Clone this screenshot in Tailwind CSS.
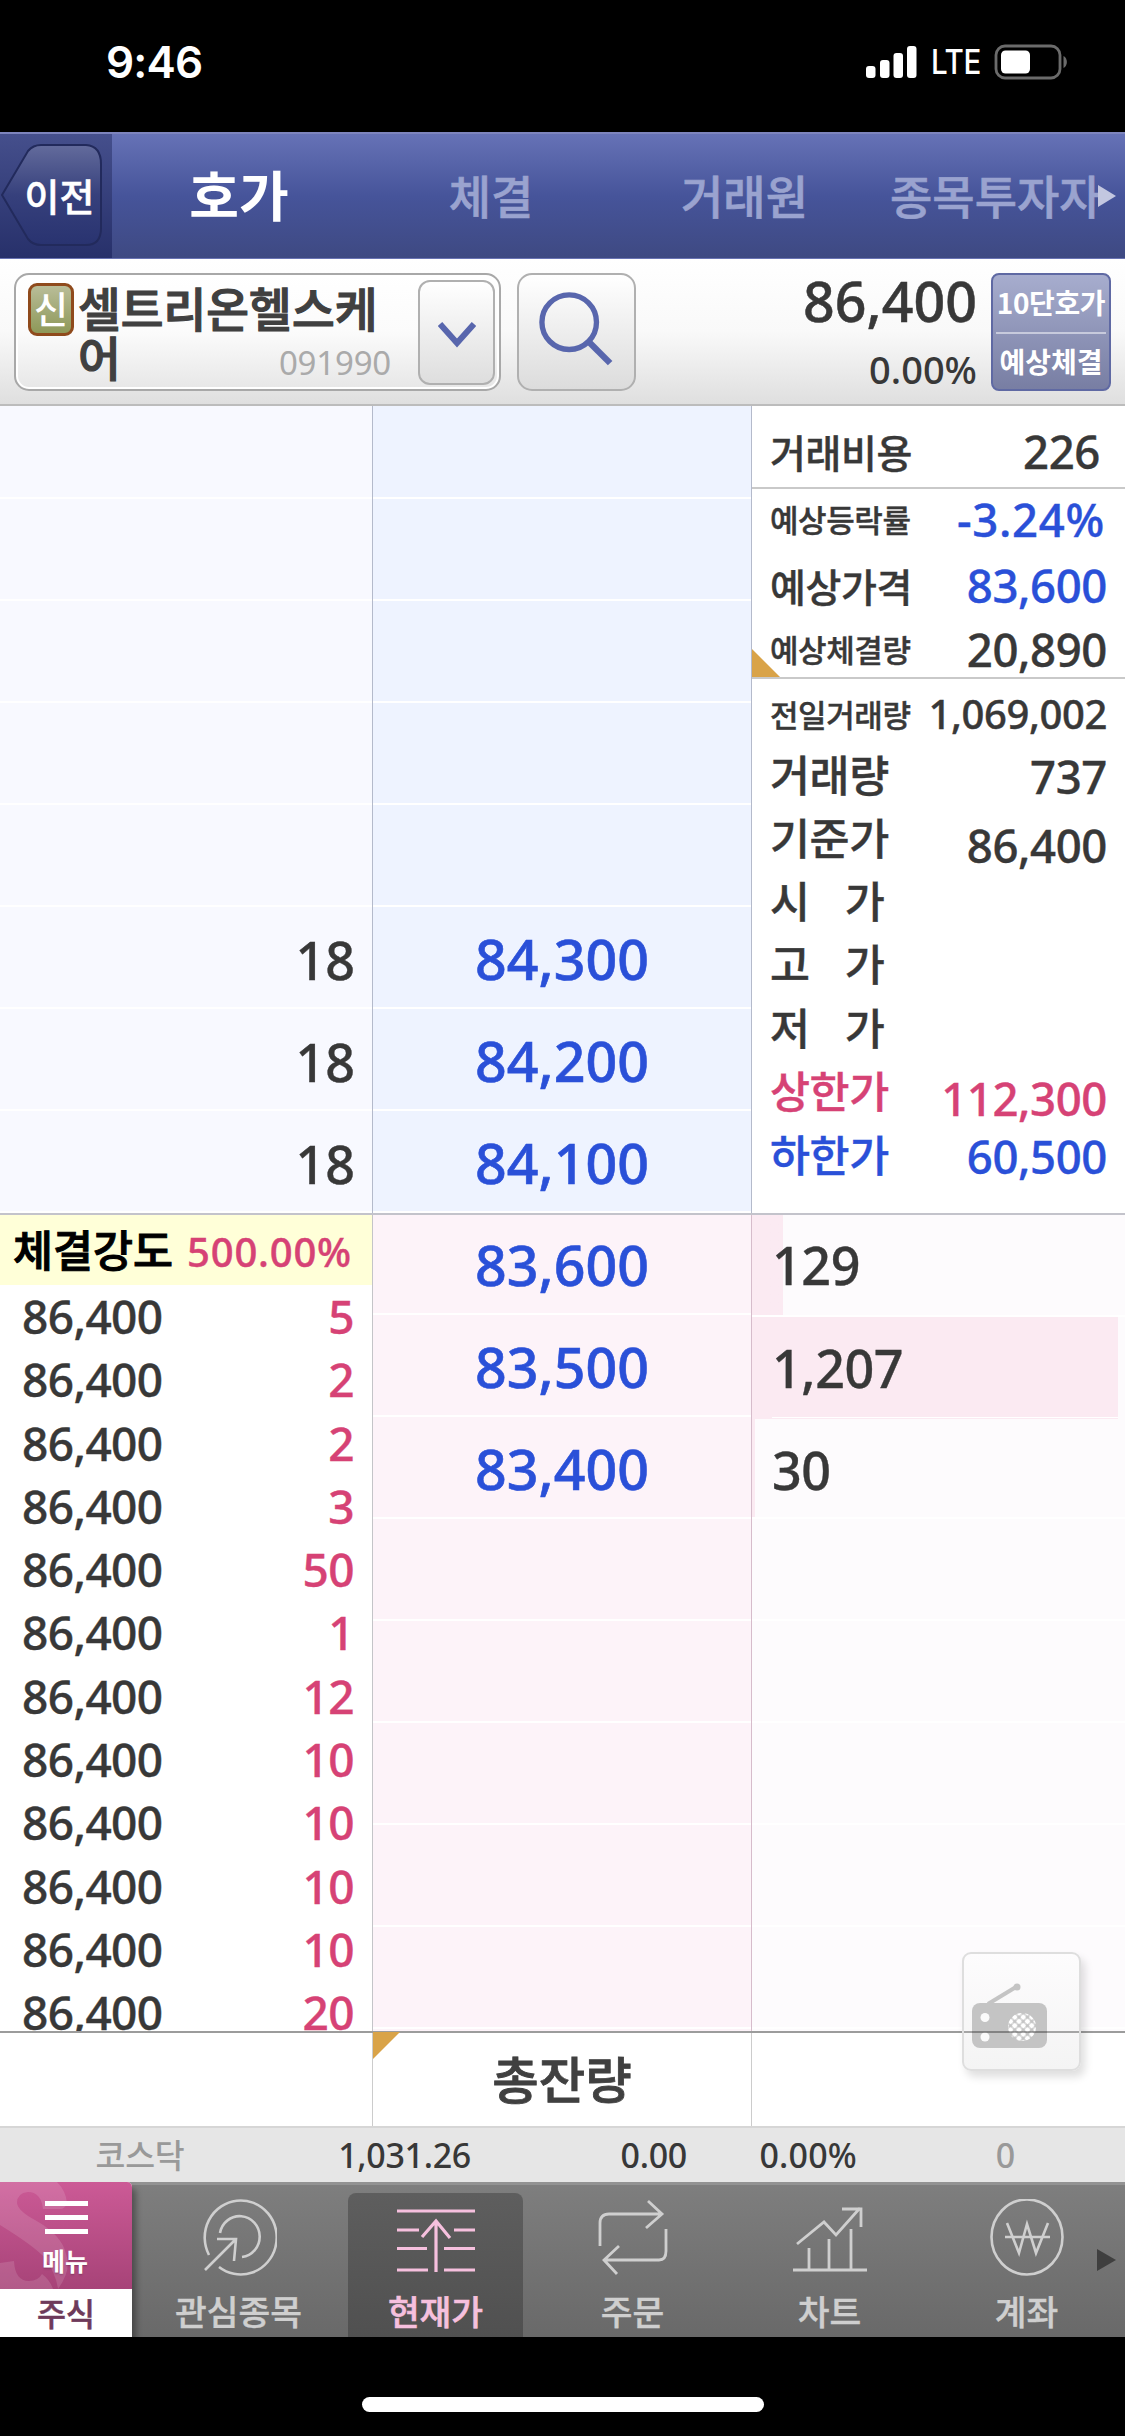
<!DOCTYPE html>
<html lang="ko">
<head>
<meta charset="utf-8">
<title>호가</title>
<script src="https://cdn.jsdelivr.net/npm/@tailwindcss/browser@4"></script>
</head>
<body class="w-[1125px] h-[2436px] overflow-hidden bg-black font-['Noto_Sans','Noto_Sans_CJK_KR',sans-serif] font-medium text-[#383838] leading-none whitespace-nowrap">

<!-- status bar -->
<header class="flex h-[132px] items-start justify-between pl-[106px] pr-[58px] pt-[39px] text-white font-['Inter',sans-serif]">
  <div class="text-[44px] leading-[46px] font-semibold tracking-[-0.8px]">9:46</div>
  <div class="flex h-[46px] items-center">
    <svg class="w-[52px] h-[34px]" viewBox="0 0 52 34" fill="#fff"><rect x="0" y="21" width="9.500" height="12" rx="3"/><rect x="14" y="15" width="9.500" height="18" rx="3"/><rect x="27.500" y="8" width="9.500" height="25" rx="3"/><rect x="41" y="1" width="9.500" height="32" rx="3"/></svg>
    <div class="ml-[13px] w-[51px] origin-left scale-x-[0.87] text-[34px] leading-[46px] tracking-[-0.5px]">LTE</div>
    <svg class="ml-[12px] w-[73px] h-[36px]" viewBox="0 0 73 36"><rect x="2" y="2" width="64" height="32" rx="9" fill="none" stroke="#6b6b6b" stroke-width="2.8"/><rect x="7" y="6.500" width="29" height="23" rx="4.500" fill="#fff"/><path d="M69.500 12c4.500 2 4.500 10 0 12z" fill="#6b6b6b"/></svg>
  </div>
</header>

<!-- section tabs -->
<nav class="relative flex h-[127px] border-t-2 border-[#7d84bd] bg-linear-to-b from-[#6672b6] via-[#46549a] to-[#3e4982] font-['Noto_Sans_CJK_KR',sans-serif] text-[46px] text-[#9aa3cf]">
  <div class="relative flex w-[112px] items-center bg-linear-to-b from-[#454f8c] to-[#27306a] text-white">
    <svg class="absolute left-0 top-[8px] w-[104px] h-[108px]" viewBox="0 0 104 108"><defs><linearGradient id="bk" x1="0" y1="0" x2="0" y2="1"><stop offset="0" stop-color="#636b9c"/><stop offset=".5" stop-color="#36407c"/><stop offset="1" stop-color="#293370"/></linearGradient></defs><path d="M2 53 L28 9 Q33 3 41 3 H86 Q101 4 101 22 V86 Q101 103 86 103 H41 Q33 103 28 97Z" fill="url(#bk)" stroke="#222a5c" stroke-width="2"/></svg>
    <div class="relative w-[112px] pl-[7px] pb-[4px] text-center text-[38px] [-webkit-text-stroke:0.5px]">이전</div>
  </div>
  <div class="flex h-[122px] flex-1 items-center pb-[3px] [-webkit-text-stroke:0.6px]">
    <div class="w-[254px] text-center text-[54px] font-bold text-white [-webkit-text-stroke:0px]">호가</div>
    <div class="w-[250px] text-center">체결</div>
    <div class="w-[257px] text-center">거래원</div>
    <div class="w-[252px] pl-[17px]">종목투자자</div>
  </div>
  <svg class="absolute right-[9px] top-[50px] w-[18px] h-[24px]" viewBox="0 0 18 24"><path d="M0 1L18 12L0 23Z" fill="#c3c7e0"/></svg>
  <div class="absolute inset-x-0 bottom-0 h-[1px] bg-[#6973b3]"></div>
</nav>

<!-- stock header -->
<section class="flex h-[147px] items-start border-b-2 border-[#bcbcbc] bg-linear-to-b from-white via-[#f9f9f9] to-[#dfdfdf] pl-[14px] pt-[14px]">
  <div class="flex h-[118px] w-[487px] rounded-[15px] border-2 border-[#a8a8a8] bg-linear-to-b from-white via-[#fbfbfb] to-[#e7e7e7] ring-2 ring-inset ring-white font-['Noto_Sans_CJK_KR',sans-serif]">
    <div class="ml-[12px] mt-[8px] flex h-[53px] w-[46px] items-center justify-center rounded-[9px] border-[3px] border-[#8f4a1c] bg-linear-to-b from-[#b9bd98] to-[#8e9858] pb-[3px] text-[37px] text-white">신</div>
    <div class="relative ml-[4px] w-[320px] pt-[7px] text-[46.5px] leading-[49px] text-[#404040] [-webkit-text-stroke:1.2px]">셀트리온헬스케<br>어
      <div class="absolute right-[7px] top-[64px] font-['Noto_Sans',sans-serif] text-[33px] leading-[48px] font-normal tracking-[-0.2px] text-[#aaaaaa] [-webkit-text-stroke:0px]">091990</div>
    </div>
    <div class="ml-[20px] mt-[5px] flex h-[105px] w-[77px] items-center justify-center rounded-[12px] border-2 border-[#b0b0b0] bg-linear-to-b from-white to-[#dedede]">
      <svg class="mt-[5px] w-[38px] h-[26px]" viewBox="0 0 38 26" fill="none" stroke="#5866ad" stroke-width="6"><path d="M2 2L19 21L36 2"/></svg>
    </div>
  </div>
  <div class="ml-[16px] flex h-[118px] w-[119px] items-start rounded-[15px] border-2 border-[#b0b0b0] bg-linear-to-b from-white to-[#dcdcdc]">
    <svg class="ml-[20px] mt-[17px] w-[76px] h-[76px]" viewBox="0 0 78 78" fill="none" stroke="#5866ad" stroke-width="5.5"><circle cx="31" cy="31" r="28"/><path d="M51 51L73 73" stroke-width="6.5"/></svg>
  </div>
  <div class="w-[341px] text-right">
    <div class="h-[56px] pr-0 text-[55.5px] leading-[56px] [-webkit-text-stroke:0.5px]">86,400</div>
    <div class="mt-[20px] h-[40px] text-[38px] leading-[40px]">0.00%</div>
  </div>
  <div class="ml-[14px] h-[118px] w-[120px] rounded-[8px] border-2 border-[#5f69a3] bg-linear-to-b from-[#a7adce] to-[#787ea3] px-[3px] text-center font-['Noto_Sans_CJK_KR',sans-serif] text-[28px] font-bold text-white">
    <div class="h-[59px] border-b-2 border-white/50 leading-[55px] tracking-[-0.4px]">10단호가</div>
    <div class="leading-[54px]">예상체결</div>
  </div>
</section>

<!-- asks and quote summary -->
<section class="flex h-[809px] border-b-2 border-[#c3c3cb] bg-white">
  <div class="w-[373px] border-r border-[#b4bacb] bg-[#f8f9ff] text-right text-[52px] [-webkit-text-stroke:0.4px]">
    <div class="h-[93px] border-b-2 border-white"></div>
    <div class="h-[102px] border-b-2 border-white"></div>
    <div class="h-[102px] border-b-2 border-white"></div>
    <div class="h-[102px] border-b-2 border-white"></div>
    <div class="h-[102px] border-b-2 border-white"></div>
    <div class="h-[102px] border-b-2 border-white pr-[17px] leading-[105px]">18</div>
    <div class="h-[102px] border-b-2 border-white pr-[17px] leading-[105px]">18</div>
    <div class="h-[102px] border-b-2 border-white pr-[17px] leading-[105px]">18</div>
  </div>
  <div class="w-[379px] border-r border-[#b4bacb] bg-[#eef3ff] text-center text-[55.5px] text-[#2a50d8] [-webkit-text-stroke:0.6px]">
    <div class="h-[93px] border-b-2 border-white"></div>
    <div class="h-[102px] border-b-2 border-white"></div>
    <div class="h-[102px] border-b-2 border-white"></div>
    <div class="h-[102px] border-b-2 border-white"></div>
    <div class="h-[102px] border-b-2 border-white"></div>
    <div class="h-[102px] border-b-2 border-white leading-[104px]">84,300</div>
    <div class="h-[102px] border-b-2 border-white leading-[104px]">84,200</div>
    <div class="h-[102px] border-b-2 border-white leading-[104px]">84,100</div>
  </div>
  <div class="w-[373px] text-[45.5px] tracking-[-0.4px] [-webkit-text-stroke:0.4px]">
    <div class="flex h-[83px] justify-between border-b-2 border-[#c9c9c9] pl-[18px] pr-[25px] leading-[90px]"><span class="font-['Noto_Sans_CJK_KR',sans-serif] text-[39px]">거래비용</span><span>226</span></div>
    <div class="relative h-[190px] border-b-2 border-[#c9c9c9] pl-[18px] pr-[18px]">
      <div class="absolute bottom-0 left-0 size-[28px] bg-[#d9a348] [clip-path:polygon(0_0,100%_100%,0_100%)]"></div>
      <div class="relative flex h-[64px] justify-between pr-[2px] leading-[60px]"><span class="font-['Noto_Sans_CJK_KR',sans-serif] text-[31px]">예상등락률</span><span class="tracking-[0.7px] text-[#2a50d8]">-3.24%</span></div>
      <div class="relative flex h-[68px] justify-between leading-[64px]"><span class="font-['Noto_Sans_CJK_KR',sans-serif] text-[39px]">예상가격</span><span class="text-[#2a50d8]">83,600</span></div>
      <div class="relative flex h-[56px] justify-between leading-[56px]"><span class="font-['Noto_Sans_CJK_KR',sans-serif] text-[31px]">예상체결량</span><span>20,890</span></div>
    </div>
    <div class="pl-[18px] pr-[18px] pt-[4px] leading-[62px]">
      <div class="flex h-[63px] justify-between"><span class="font-['Noto_Sans_CJK_KR',sans-serif] text-[31px] leading-[61px]">전일거래량</span><span class="text-[40px] leading-[61px]">1,069,002</span></div>
      <div class="flex h-[63px] justify-between"><span class="font-['Noto_Sans_CJK_KR',sans-serif] text-[43.5px] leading-[56px]">거래량</span><span class="leading-[60px]">737</span></div>
      <div class="flex h-[64px] justify-between"><span class="font-['Noto_Sans_CJK_KR',sans-serif] text-[43.5px] leading-[56px]">기준가</span><span class="pt-[5px]">86,400</span></div>
      <div class="flex h-[63px] gap-[35px] font-['Noto_Sans_CJK_KR',sans-serif] text-[43.5px] leading-[54px]"><span>시</span><span>가</span></div>
      <div class="flex h-[63px] gap-[35px] font-['Noto_Sans_CJK_KR',sans-serif] text-[43.5px] leading-[54px]"><span>고</span><span>가</span></div>
      <div class="flex h-[63px] gap-[35px] font-['Noto_Sans_CJK_KR',sans-serif] text-[43.5px] leading-[55px]"><span>저</span><span>가</span></div>
      <div class="flex h-[64px] justify-between text-[#d64275]"><span class="font-['Noto_Sans_CJK_KR',sans-serif] text-[43.5px] leading-[56px]">상한가</span><span class="pt-[5px]">112,300</span></div>
      <div class="flex h-[63px] justify-between text-[#2a50d8]"><span class="font-['Noto_Sans_CJK_KR',sans-serif] text-[43.5px] leading-[56px]">하한가</span><span class="leading-[61px]">60,500</span></div>
    </div>
  </div>
</section>

<!-- trades and bids -->
<section class="relative flex h-[816px] bg-white">
  <div class="h-[816px] w-[373px] overflow-hidden border-r border-[#c4c4c8] text-[46px] leading-[62px] [-webkit-text-stroke:0.4px]">
    <div class="flex h-[70px] justify-between bg-[#ffffd8] pl-[13px] pr-[20px] leading-[70px]"><span class="font-['Noto_Sans_CJK_KR',sans-serif] text-[43.5px] leading-[68px] text-black [-webkit-text-stroke:1px]">체결강도</span><span class="text-[40px] leading-[73px] tracking-[0.8px] text-[#d64275]">500.00%</span></div>
    <div class="tracking-[-0.6px]">
      <div class="flex h-[63.3px] justify-between pl-[22px] pr-[18px]"><span>86,400</span><span class="text-[#d64275]">5</span></div>
      <div class="flex h-[63.3px] justify-between pl-[22px] pr-[18px]"><span>86,400</span><span class="text-[#d64275]">2</span></div>
      <div class="flex h-[63.3px] justify-between pl-[22px] pr-[18px]"><span>86,400</span><span class="text-[#d64275]">2</span></div>
      <div class="flex h-[63.3px] justify-between pl-[22px] pr-[18px]"><span>86,400</span><span class="text-[#d64275]">3</span></div>
      <div class="flex h-[63.3px] justify-between pl-[22px] pr-[18px]"><span>86,400</span><span class="text-[#d64275]">50</span></div>
      <div class="flex h-[63.3px] justify-between pl-[22px] pr-[18px]"><span>86,400</span><span class="text-[#d64275]">1</span></div>
      <div class="flex h-[63.3px] justify-between pl-[22px] pr-[18px]"><span>86,400</span><span class="text-[#d64275]">12</span></div>
      <div class="flex h-[63.3px] justify-between pl-[22px] pr-[18px]"><span>86,400</span><span class="text-[#d64275]">10</span></div>
      <div class="flex h-[63.3px] justify-between pl-[22px] pr-[18px]"><span>86,400</span><span class="text-[#d64275]">10</span></div>
      <div class="flex h-[63.3px] justify-between pl-[22px] pr-[18px]"><span>86,400</span><span class="text-[#d64275]">10</span></div>
      <div class="flex h-[63.3px] justify-between pl-[22px] pr-[18px]"><span>86,400</span><span class="text-[#d64275]">10</span></div>
      <div class="flex h-[63.3px] justify-between pl-[22px] pr-[18px]"><span>86,400</span><span class="text-[#d64275]">20</span></div>
    </div>
  </div>
  <div class="w-[379px] border-r border-[#d6bccb] bg-[#fdf3f9] text-center text-[55.5px] text-[#2a50d8] [-webkit-text-stroke:0.6px]">
    <div class="h-[100px] border-b-2 border-white leading-[99px]">83,600</div>
    <div class="h-[102px] border-b-2 border-white leading-[103px]">83,500</div>
    <div class="h-[102px] border-b-2 border-white leading-[103px]">83,400</div>
    <div class="h-[102px] border-b-2 border-white"></div>
    <div class="h-[102px] border-b-2 border-white"></div>
    <div class="h-[102px] border-b-2 border-white"></div>
    <div class="h-[102px] border-b-2 border-white"></div>
    <div class="h-[102px] border-b-2 border-white"></div>
  </div>
  <div class="w-[373px] bg-[#fdfbfd] text-[52px] tracking-[-0.4px] [-webkit-text-stroke:0.4px]">
    <div class="h-[102px] border-b-2 border-white bg-linear-to-r from-[#fbeaf2] from-[31px] to-transparent to-[31px] pl-[20px] leading-[100px]">129</div>
    <div class="mr-[7px] h-[102px] bg-[#fbeaf2] pl-[20px] leading-[101px]"><div class="h-[101px] border-b border-white">1,207</div></div>
    <div class="h-[100px] border-b-2 border-white bg-linear-to-r from-[#fbeaf2] from-[3px] to-transparent to-[3px] pl-[20px] leading-[101px]">30</div>
    <div class="h-[102px] border-b-2 border-white"></div>
    <div class="h-[102px] border-b-2 border-white"></div>
    <div class="h-[102px] border-b-2 border-white"></div>
    <div class="h-[102px] border-b-2 border-white"></div>
    <div class="h-[102px] border-b-2 border-white"></div>
  </div>

  <!-- floating radio button -->
  <div class="absolute left-[962px] top-[737px] z-10 size-[119px] rounded-[9px] border-2 border-[#dedede] bg-linear-to-b from-[#fdfcfd] to-[#f4f4f4] shadow-[4px_6px_8px_rgba(0,0,0,0.13)]">
    <svg class="w-[115px] h-[115px]" viewBox="0 0 115 115">
      <defs><pattern id="mesh" width="6" height="6" patternUnits="userSpaceOnUse" patternTransform="rotate(45 55 73)"><rect width="6" height="6" fill="#c4c4c4"/><circle cx="3" cy="3" r="2.5" fill="#fff"/></pattern></defs>
      <path d="M24 50L52 33" stroke="#c4c4c4" stroke-width="4"/><circle cx="53" cy="33" r="3.5" fill="#c4c4c4"/>
      <rect x="8" y="49" width="75" height="45" rx="8" fill="#c4c4c4"/>
      <circle cx="21" cy="63.500" r="4.500" fill="#fafafa"/><circle cx="21" cy="83" r="4.500" fill="#fafafa"/>
      <circle cx="58" cy="73" r="14" fill="url(#mesh)"/>
      <path d="M0 78H115" stroke="#000" stroke-opacity=".33" stroke-width="2"/>
    </svg>
  </div>
</section>

<!-- totals -->
<section class="flex h-[95px] border-t-2 border-[#9c9c9c] bg-white">
  <div class="w-[373px] border-r border-[#cccccc]"></div>
  <div class="relative w-[379px] border-r border-[#cccccc] text-center font-['Noto_Sans_CJK_KR',sans-serif] text-[50.5px] leading-[89px] text-[#404040] [-webkit-text-stroke:0.8px]">
    <div class="absolute left-0 top-[-1px] size-[27px] bg-[#d9a348] [clip-path:polygon(0_0,100%_0,0_100%)]"></div>
    총잔량
  </div>
</section>

<!-- index ticker -->
<section class="flex h-[56px] border-t-2 border-[#d6d6d6] bg-[#e6e6e6] text-[34px] leading-[54px] tracking-[-0.3px]">
  <div class="w-[280px] text-center font-['Noto_Sans_CJK_KR',sans-serif] text-[32.5px] leading-[52px] text-[#999]">코스닥</div>
  <div class="w-[191px] text-right">1,031.26</div>
  <div class="w-[216px] text-right">0.00</div>
  <div class="w-[170px] text-right tracking-[0.2px]">0.00%</div>
  <div class="w-[158px] text-right text-[#999]">0</div>
</section>

<!-- bottom navigation -->
<nav class="relative flex h-[155px] border-t-[3px] border-[#929292] bg-linear-to-b from-[#7e7e7e] to-[#696969] font-['Noto_Sans_CJK_KR',sans-serif] text-[34.5px] text-[#cfcfcf]">
  <div class="relative z-10 mt-[-3px] h-[155px] w-[132px] overflow-hidden rounded-tr-[5px] bg-white text-center shadow-[4px_6px_6px_rgba(0,0,0,0.35)]">
    <div class="relative flex h-[107px] flex-col items-center bg-linear-to-b from-[#cc5a96] to-[#a74378] text-white">
      <svg class="absolute left-0 top-0 w-[132px] h-[107px]" viewBox="0 0 132 107" fill="#fff" fill-opacity=".13"><path d="M8 0H57Q66 9 67 21Q65 27 60 27H43Q41 10 28 10Q17 11 17 21Q18 29 35 38Q62 53 66 72Q72 88 58 107Q56 92 45 76Q34 64 0 43V0Z"/><path d="M0 81L14 79Q15 99 29 99Q38 99 42 92Q50 98 53 107H0Z"/></svg>
      <div class="relative mt-[19px] flex h-[33px] w-[43px] flex-col justify-between"><i class="block h-[5px] bg-white"></i><i class="block h-[5px] bg-white"></i><i class="block h-[5px] bg-white"></i></div>
      <div class="relative mt-[12px] pr-[2px] text-[25px] font-bold leading-[28px] text-shadow-sm">메뉴</div>
    </div>
    <div class="text-[31.5px] leading-[46px] text-[#6e3a5a] [-webkit-text-stroke:0.5px]">주식</div>
  </div>
  <div class="ml-[8px] flex w-[985px]">
    <div class="flex w-[197px] flex-col items-center">
      <svg class="mt-[14px] w-[76px] h-[80px]" viewBox="0 0 76 80" fill="none" stroke="#cfcfcf" stroke-width="2.6"><path d="M8 56A36 37 0 1 1 18 68"/><path d="M19 34A20 20.500 0 1 1 41 58"/><path d="M4 71L35 40M16 40H35L33 62"/></svg>
      <div class="mt-[12px] leading-[38px] [-webkit-text-stroke:0.4px]">관심종목</div>
    </div>
    <div class="mx-[11px] mt-[8px] flex w-[175px] flex-col items-center rounded-t-[8px] bg-linear-to-b from-[#5e5e5e] to-[#505050] text-[#f6c0de]">
      <svg class="mt-[6px] w-[80px] h-[80px]" viewBox="0 0 80 80" fill="none" stroke="#f6c0de" stroke-width="3.2"><path d="M1 12H79M1 31H23M58 31H79M1 49.500H31M48 49.500H79M1 71H32M48 71H79M40 73V22M26 38L40 22L54 39"/></svg>
      <div class="mt-[12px] leading-[38px] [-webkit-text-stroke:0.6px]">현재가</div>
    </div>
    <div class="flex w-[197px] flex-col items-center">
      <svg class="mt-[14px] w-[76px] h-[80px]" viewBox="0 0 76 80" fill="none" stroke="#cfcfcf" stroke-width="2.8"><path d="M5 47V24Q5 15 14 15H65M53 2L67 15L51 29M71 30V52Q71 61 64 61H10M24 47L9 61L22 75"/></svg>
      <div class="mt-[12px] leading-[38px] [-webkit-text-stroke:0.4px]">주문</div>
    </div>
    <div class="flex w-[197px] flex-col items-center">
      <svg class="mt-[14px] w-[76px] h-[80px]" viewBox="0 0 76 80" fill="none" stroke="#cfcfcf" stroke-width="2.8"><path d="M1 71H75M17 71V49M37 71V40M59 71V30M5 45L32 23L44 36L68 9M50 10H69V28"/></svg>
      <div class="mt-[12px] leading-[38px] [-webkit-text-stroke:0.4px]">차트</div>
    </div>
    <div class="flex w-[197px] flex-col items-center">
      <svg class="mt-[14px] w-[76px] h-[80px]" viewBox="0 0 76 80" fill="none" stroke="#cfcfcf" stroke-width="2.6"><ellipse cx="38" cy="38" rx="35.500" ry="37.500"/><path d="M18 24L30 54L38 25L47 54L59 24M16 38H61"/></svg>
      <div class="mt-[12px] leading-[38px] [-webkit-text-stroke:0.4px]">계좌</div>
    </div>
  </div>
  <svg class="absolute left-[1097px] top-[64px] w-[20px] h-[22px]" viewBox="0 0 20 22"><path d="M0 0L19 11L0 22Z" fill="#3f3f3f"/></svg>
</nav>

<!-- home indicator -->
<footer class="flex h-[99px] items-start justify-center bg-black pt-[60px]"><div class="h-[15px] w-[402px] rounded-full bg-white"></div></footer>
</body>
</html>
